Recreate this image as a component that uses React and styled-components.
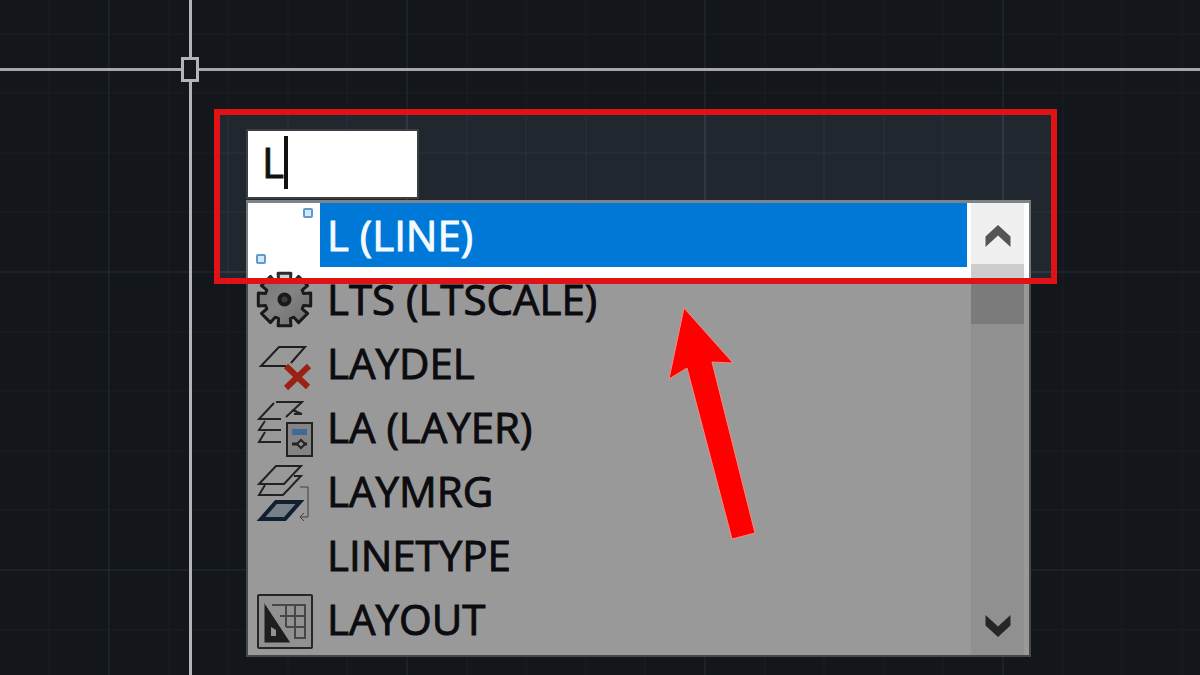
import React, { useState } from "react";
import styled, { createGlobalStyle } from "styled-components";

const commands = [
  { name: "L (LINE)", icon: LineIcon },
  { name: "LTS (LTSCALE)", icon: GearIcon },
  { name: "LAYDEL", icon: LayerDeleteIcon },
  { name: "LA (LAYER)", icon: LayerIcon },
  { name: "LAYMRG", icon: LayerMergeIcon },
  { name: "LINETYPE", icon: null },
  { name: "LAYOUT", icon: LayoutIcon },
];

const App = () => {
  const [value, setValue] = useState("L");
  const [selected, setSelected] = useState(0);

  return (
    <>
      <GlobalStyle />
      <Canvas>
        <Prompt>
          <CommandField>
            <CommandInput
              aria-label="Command"
              value={value}
              onChange={(e) => setValue(e.target.value)}
            />
            <Caret />
          </CommandField>
          <Popup>
            <List role="listbox" aria-label="Commands">
              {commands.map(({ name, icon: Icon }, i) => (
                <Row
                  key={name}
                  role="option"
                  aria-selected={i === selected}
                  onClick={() => setSelected(i)}
                >
                  <IconCell>{Icon && <Icon />}</IconCell>
                  <Name $selected={i === selected}>{name}</Name>
                </Row>
              ))}
            </List>
            <ScrollBar>
              <ScrollButton aria-label="Scroll up">
                <svg width="26" height="24" viewBox="0 0 26 24" fill="#555">
                  <path d="M0.5 12.5 13 1l12.5 11.5V23L13 11.5 0.5 23z" />
                </svg>
              </ScrollButton>
              <Thumb />
              <ScrollButton aria-label="Scroll down">
                <svg width="26" height="24" viewBox="0 0 26 24" fill="#404040">
                  <path d="M0.5 10.5 13 22l12.5-11.5V0L13 11.5 0.5 0z" />
                </svg>
              </ScrollButton>
            </ScrollBar>
          </Popup>
          <Spotlight />
          <Pointer width="90" height="234" viewBox="0 0 90 234">
            <path
              d="M17 2 66 57 45 56 88 227 65 233 20 62 2 73z"
              fill="#f00"
              stroke="#f58a80"
              strokeWidth="1"
            />
          </Pointer>
        </Prompt>
        <CrosshairX />
        <CrosshairY />
        <PickBox />
      </Canvas>
    </>
  );
};

export default App;

function LineIcon() {
  return (
    <IconSvg viewBox="0 0 72 64" fill="#d6e8f8" stroke="#5f9bd1" strokeWidth="2">
      <rect x="56" y="6" width="8" height="8" rx="1" />
      <rect x="9" y="52" width="8" height="8" rx="1" />
    </IconSvg>
  );
}

// eight flat teeth around the hub
function gearPath(cx, cy) {
  const points = [];
  for (let i = 0; i < 8; i++) {
    const a = (i * Math.PI) / 4;
    [
      [-0.3, 20],
      [-0.24, 27],
      [0.24, 27],
      [0.3, 20],
    ].forEach(([offset, r]) => {
      points.push(
        `${(cx + r * Math.sin(a + offset)).toFixed(1)} ${(
          cy -
          r * Math.cos(a + offset)
        ).toFixed(1)}`
      );
    });
  }
  return `M${points.join("L")}z`;
}

function GearIcon() {
  return (
    <IconSvg viewBox="0 0 72 64">
      <defs>
        <linearGradient id="gear" x1="0" y1="0" x2="1" y2="1">
          <stop offset="0" stopColor="#c4c4c4" />
          <stop offset="0.5" stopColor="#dcdcdc" />
          <stop offset="1" stopColor="#b0b0b0" />
        </linearGradient>
      </defs>
      <path
        d={gearPath(36.5, 32.5)}
        fill="url(#gear)"
        stroke="#2c2c2c"
        strokeWidth="3"
        strokeLinejoin="round"
      />
      <circle cx="36.5" cy="32.5" r="5" fill="#666" stroke="#2c2c2c" strokeWidth="4" />
    </IconSvg>
  );
}

function LayerDeleteIcon() {
  return (
    <IconSvg viewBox="0 0 72 64" fill="none">
      <path d="M38 35H13L31 16H57L43 32" stroke="#333" strokeWidth="2" />
      <path d="M38 35 60 56M61 35 38 57" stroke="#ff3824" strokeWidth="6" />
    </IconSvg>
  );
}

function LayerIcon() {
  return (
    <IconSvg viewBox="0 0 72 64" fill="none" stroke="#3a3a3a" strokeWidth="2">
      <path d="M33 24H11L26 8M28 7H54L38 22" />
      <path d="M17 26 11 35H33M17 37 11 47H33" />
      <path d="M44 15 54 19M48 15 47 19H54" />
      <rect x="39" y="28" width="25" height="33" fill="#dcdcdc" />
      <rect x="44" y="34" width="15" height="6" fill="#6cb0ff" stroke="none" />
      <path d="M44 49H59" strokeWidth="3" />
      <path d="M53 45 57 49 53 53 49 49z" fill="#eee" />
    </IconSvg>
  );
}

function LayerMergeIcon() {
  return (
    <IconSvg viewBox="0 0 72 64" fill="none" stroke="#3a3a3a" strokeWidth="2">
      <path d="M11 25 28 7H53L36 25z" />
      <path d="M17 26 11 36H35L53 17H46" />
      <path d="M52 28H60V58H53M56 54 52 58 56 62" stroke="#6a6a6a" strokeWidth="1" />
      <path
        d="M13 60 28 43H52L37 60z"
        fill="#c6d6e4"
        stroke="#1e3450"
        strokeWidth="4"
      />
    </IconSvg>
  );
}

function LayoutIcon() {
  return (
    <IconSvg viewBox="0 0 72 64" fill="none">
      <rect
        x="10"
        y="8"
        width="54"
        height="53"
        rx="1"
        fill="#f2f2f2"
        stroke="#404040"
        strokeWidth="2"
      />
      <path
        d="M24 18H57V51H47V18M38 18V40M32 29H57M38 40H57"
        stroke="#777"
        strokeWidth="2"
      />
      <path d="M16 15 43 56H16z" fill="#333" stroke="#f2f2f2" strokeWidth="1" />
      <path d="M23 40 28 43V49H23z" fill="#f2f2f2" />
    </IconSvg>
  );
}

const GlobalStyle = createGlobalStyle`
  * {
    box-sizing: border-box;
  }
  body {
    margin: 0;
    background: #21272f;
  }
`;

const major = "rgba(150, 165, 190, 0.13)";
const minor = "rgba(150, 165, 190, 0.04)";

const gridLines = (direction) =>
  [
    `linear-gradient(${direction}, ${major} 2px, transparent 2px)`,
    ...[60, 119, 179, 238].map(
      (at) =>
        `linear-gradient(${direction}, transparent ${at}px, ${minor} ${at}px, ${minor} ${
          at + 2
        }px, transparent ${at + 2}px)`
    ),
  ].join(", ");

const Canvas = styled.main`
  position: relative;
  min-height: 100vh;
  padding: 131px 169px 18px 246px;
  overflow: hidden;
  background-color: #21272f;
  background-image: ${gridLines("to right")}, ${gridLines("to bottom")};
  background-size: 298px 298px;
  background-position: 108px 271px;
  font-family: "Open Sans", "Noto Sans", sans-serif;
  font-size: 42px;
  line-height: 64px;
  -webkit-text-stroke-width: 1px;
`;

const Prompt = styled.div`
  position: relative;
`;

const CommandField = styled.div`
  display: flex;
  align-items: center;
  width: 169px;
  height: 66px;
  margin-left: 2px;
  padding-left: 14px;
  background: #fff;
  box-shadow: 0 0 0 2px #3c3f42;
`;

const CommandInput = styled.input`
  width: 22px;
  height: 62px;
  margin-bottom: 4px;
  padding: 0;
  border: none;
  outline: none;
  background: transparent;
  color: #111;
  font: inherit;
`;

const Caret = styled.span`
  width: 4px;
  height: 53px;
  margin-bottom: 4px;
  background: #111;
`;

const Popup = styled.div`
  display: flex;
  gap: 4px;
  margin-top: 3px;
  padding-right: 5px;
  border: 2px solid #777;
  border-top: 3px solid #7d8388;
  background: #fff;
`;

const List = styled.ul`
  flex: 1;
  margin: 0;
  padding: 0 0 4px;
  list-style: none;
`;

const Row = styled.li`
  display: flex;
  height: 64px;
  cursor: default;
`;

const IconCell = styled.span`
  width: 72px;
  height: 64px;
`;

const IconSvg = styled.svg`
  display: block;
  width: 72px;
  height: 64px;
`;

const Name = styled.span`
  flex: 1;
  padding-left: 7px;
  background: ${({ $selected }) => ($selected ? "#0078d7" : "transparent")};
  color: ${({ $selected }) => ($selected ? "#f4faff" : "#15151c")};
`;

const ScrollBar = styled.div`
  display: flex;
  flex-direction: column;
  width: 53px;
  background: #f0f0f0;
`;

const ScrollButton = styled.button`
  display: flex;
  align-items: center;
  justify-content: center;
  height: 61px;
  padding: 4px 0 0;
  border: none;
  background: transparent;
`;

const Thumb = styled.div`
  height: 60px;
  margin-bottom: auto;
  background: #cdcdcd;
`;

/* the shadow dims everything outside of the frame */
const Spotlight = styled.div`
  position: absolute;
  top: -22px;
  left: -32px;
  right: -26px;
  height: 175px;
  border: 6px solid #e01216;
  box-shadow: 0 0 0 3000px rgba(0, 0, 0, 0.4);
  pointer-events: none;
`;

const Pointer = styled.svg`
  position: absolute;
  top: 175px;
  left: 421px;
  pointer-events: none;
`;

const CrosshairX = styled.div`
  position: absolute;
  top: 68px;
  left: 0;
  right: 0;
  height: 3px;
  background: #a5a7ab;
`;

const CrosshairY = styled.div`
  position: absolute;
  top: 0;
  bottom: 0;
  left: 189px;
  width: 3px;
  background: #b3b4ba;
`;

const PickBox = styled.div`
  position: absolute;
  top: 57px;
  left: 181px;
  width: 18px;
  height: 25px;
  border: 3px solid #b3b4ba;
  background: #14171d;
`;
